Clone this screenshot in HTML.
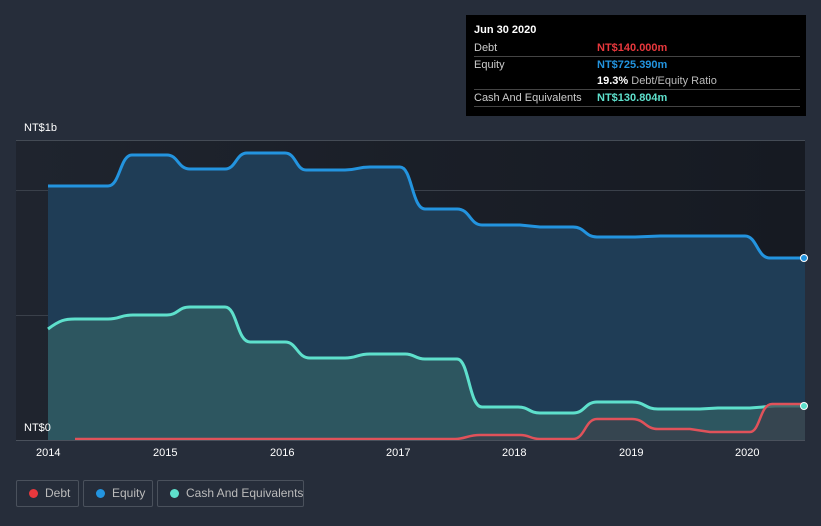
<!DOCTYPE html><html><head><style>
html,body{margin:0;padding:0}
body{background:#262d3a;width:821px;height:526px;overflow:hidden;font-family:"Liberation Sans",sans-serif;position:relative}
.tip{position:absolute;left:466px;top:15px;width:340px;height:101px;background:#000;color:#ccc;font-size:11px}
.tip .r{position:absolute;left:8px;right:6px;border-bottom:1px solid #444;height:16px;line-height:16px}
.lg{position:absolute;top:480px;height:27px;border:1px solid #4a515c;border-radius:2px;color:#bbb;font-size:12px;line-height:25px;box-sizing:border-box;white-space:nowrap}
.lg i{position:absolute;left:12px;top:8px;width:9px;height:9px;border-radius:50%}
.ax{position:absolute;color:#fff;font-size:11px}
</style></head><body>
<svg width="821" height="526" style="position:absolute;left:0;top:0">
<defs><linearGradient id="g" x1="0" x2="1"><stop offset="0" stop-color="#1f242e"/><stop offset="1" stop-color="#161a22"/></linearGradient></defs>
<rect x="16" y="140" width="789" height="300" fill="url(#g)"/>
<line x1="16" x2="805" y1="140.5" y2="140.5" stroke="#444b55"/>
<line x1="16" x2="805" y1="190.5" y2="190.5" stroke="#3a404a"/>
<line x1="16" x2="805" y1="315.5" y2="315.5" stroke="#3a404a"/>
<path d="M48,186 L108,186 C120,186 120,155 132,155 L167,155 C178,155 178,169 190,169 L225,169 C236,169 236,153 247,153 L285,153 C296,153 296,170 306,170 L345,170 C357,170 357,167 370,167 L400,167 C412,167 412,209 425,209 L457,209 C470,209 470,225 482,225 L520,225 L540,227 L573,227 C585,227 585,237 597,237 L635,237 L660,236 L745,236 C757,236 757,258 770,258 L805,258 L805,440 L48,440Z" fill="#1f3d56" stroke="none"/>
<path d="M48,186 L108,186 C120,186 120,155 132,155 L167,155 C178,155 178,169 190,169 L225,169 C236,169 236,153 247,153 L285,153 C296,153 296,170 306,170 L345,170 C357,170 357,167 370,167 L400,167 C412,167 412,209 425,209 L457,209 C470,209 470,225 482,225 L520,225 L540,227 L573,227 C585,227 585,237 597,237 L635,237 L660,236 L745,236 C757,236 757,258 770,258 L805,258" fill="none" stroke="#2394df" stroke-width="3"/>
<path d="M48,329 C60,320 65,319 75,319 L108,319 C120,319 120,315 133,315 L167,315 C178,315 178,307 190,307 L225,307 C237,307 237,342 250,342 L285,342 C297,342 297,358 310,358 L345,358 C357,358 357,354 370,354 L405,354 C415,354 415,359 425,359 L457,359 C469,359 469,407 482,407 L518,407 C529,407 529,413 540,413 L573,413 C585,413 585,402 597,402 L632,402 C645,402 645,409 658,409 L700,409 L718,408 L750,408 L775,406 L805,406 L805,440 L48,440Z" fill="#305a62" fill-opacity=".85"/>
<path d="M48,329 C60,320 65,319 75,319 L108,319 C120,319 120,315 133,315 L167,315 C178,315 178,307 190,307 L225,307 C237,307 237,342 250,342 L285,342 C297,342 297,358 310,358 L345,358 C357,358 357,354 370,354 L405,354 C415,354 415,359 425,359 L457,359 C469,359 469,407 482,407 L518,407 C529,407 529,413 540,413 L573,413 C585,413 585,402 597,402 L632,402 C645,402 645,409 658,409 L700,409 L718,408 L750,408 L775,406 L805,406" fill="none" stroke="#5ee0cc" stroke-width="3"/>
<path d="M75,439 L455,439 C465,439 468,435 480,435 L520,435 C530,435 530,439 540,439 L573,439 C585,439 585,419 597,419 L632,419 C645,419 645,429 658,429 L690,429 L710,432 L750,432 C760,432 760,404 772,404 L805,404 L805,440 L75,440Z" fill="#3a3e4a" fill-opacity=".7"/>
<path d="M75,439 L455,439 C465,439 468,435 480,435 L520,435 C530,435 530,439 540,439 L573,439 C585,439 585,419 597,419 L632,419 C645,419 645,429 658,429 L690,429 L710,432 L750,432 C760,432 760,404 772,404 L805,404" fill="none" stroke="#e0525a" stroke-width="2.5"/>
<line x1="16" x2="805" y1="440.5" y2="440.5" stroke="#4a515c"/>
<circle cx="804" cy="258" r="3.5" fill="#2394df" stroke="#fff"/>
<circle cx="804" cy="406" r="3.5" fill="#5ee0cc" stroke="#fff"/>
</svg>
<div class="ax" style="left:24px;top:122px">NT$1b</div>
<div class="ax" style="left:24px;top:422px">NT$0</div>
<div class="ax" style="left:36px;top:447px">2014</div>
<div class="ax" style="left:153px;top:447px">2015</div>
<div class="ax" style="left:270px;top:447px">2016</div>
<div class="ax" style="left:386px;top:447px">2017</div>
<div class="ax" style="left:502px;top:447px">2018</div>
<div class="ax" style="left:619px;top:447px">2019</div>
<div class="ax" style="left:735px;top:447px">2020</div>
<div class="tip">
<div style="position:absolute;left:8px;top:9px;color:#fff;font-weight:bold">Jun 30 2020</div>
<div class="r" style="top:25px">Debt<span style="position:absolute;left:123px;color:#e8383d;font-weight:bold">NT$140.000m</span></div>
<div class="r" style="top:42px;border:none">Equity<span style="position:absolute;left:123px;color:#2394df;font-weight:bold">NT$725.390m</span></div>
<div class="r" style="top:58px"><span style="position:absolute;left:123px;color:#fff;font-weight:bold;white-space:nowrap">19.3% <span style="color:#bbb;font-weight:normal">Debt/Equity Ratio</span></span></div>
<div class="r" style="top:75px">Cash And Equivalents<span style="position:absolute;left:123px;color:#5ee0cc;font-weight:bold">NT$130.804m</span></div>
</div>
<div class="lg" style="left:16px;width:63px"><i style="background:#e8383d"></i><span style="position:absolute;left:28px">Debt</span></div>
<div class="lg" style="left:83px;width:70px"><i style="background:#2394df"></i><span style="position:absolute;left:28px">Equity</span></div>
<div class="lg" style="left:157px;width:147px"><i style="background:#5ee0cc"></i><span style="position:absolute;left:28px">Cash And Equivalents</span></div>
</body></html>
